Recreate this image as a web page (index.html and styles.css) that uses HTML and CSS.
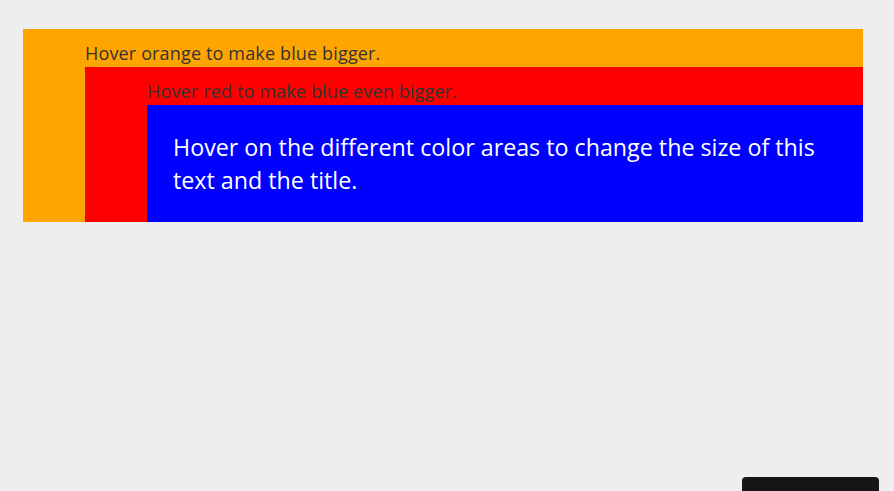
FILE: index.html
```html
<!DOCTYPE html>
<html lang="en">
<head>
  <meta charset="UTF-8">
  <title>Hover sizes</title>
  <link rel="stylesheet" href="styles.css">
</head>
<body>
  <div class="orange">
    <p class="label">Hover orange to make blue bigger.</p>
    <div class="red">
      <p class="label">Hover red to make blue even bigger.</p>
      <div class="blue">
        <p>Hover on the different color areas to change the size of this text and the title.</p>
      </div>
    </div>
  </div>
  <div class="dock"></div>
</body>
</html>
```

FILE: styles.css
```css
body {
  margin: 0;
  padding: 29px 31px 0 23px;
  height: 491px;
  box-sizing: border-box;
  overflow: hidden;
  background-color: #edeeed;
  color: #333;
  font-family: 'Open Sans', sans-serif;
}
.orange {
  background-color: orange;
  padding-left: 62px;
}
.red {
  background-color: red;
  padding-left: 62px;
}
.label {
  margin: 0;
  padding-top: 10px;
  font-size: 18px;
  line-height: 28px;
  letter-spacing: 0.15px;
  white-space: nowrap;
}
.blue {
  background-color: blue;
  color: #fff;
  padding: 26px 26px 25px;
}
.blue p {
  margin: 0;
  font-size: 23.25px;
  line-height: 33px;
}
.dock {
  position: fixed;
  left: 742px;
  top: 477px;
  width: 137px;
  height: 30px;
  background-color: #161616;
  border-radius: 4px;
}
```
